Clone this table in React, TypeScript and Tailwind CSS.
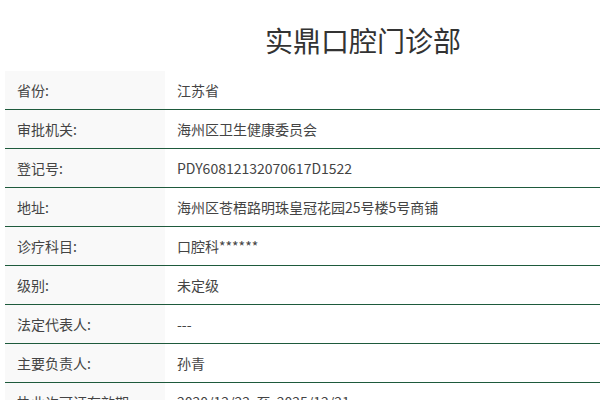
import React from "react";

const rows: [string, string][] = [
  ["省份:", "江苏省"],
  ["审批机关:", "海州区卫生健康委员会"],
  ["登记号:", "PDY60812132070617D1522"],
  ["地址:", "海州区苍梧路明珠皇冠花园25号楼5号商铺"],
  ["诊疗科目:", "口腔科******"],
  ["级别:", "未定级"],
  ["法定代表人:", "---"],
  ["主要负责人:", "孙青"],
  ["执业许可证有效期:", "2020/12/22  至  2025/12/21"],
];

export default function App() {
  return (
    <div
      className="w-[600px] h-[400px] overflow-hidden bg-white text-[#444]"
      style={{ fontFamily: '"Noto Sans CJK SC", "Noto Sans", sans-serif' }}
    >
      <div className="w-[716px] ml-[5px]">
        <h1 className="pt-[20px] h-[71px] text-center text-[28px] leading-[40px] font-normal text-[#333]">
          实鼎口腔门诊部
        </h1>
        <div className="flex flex-col">
          {rows.map(([k, v]) => (
            <div key={k} className="flex h-[39px] border-b border-[#1e5a3c] text-[14px]">
              <div className="w-[160px] bg-[#f9f9f9] pl-[12px] flex items-center">{k}</div>
              <div className="pl-[12px] flex items-center whitespace-pre">{v}</div>
            </div>
          ))}
        </div>
      </div>
    </div>
  );
}
